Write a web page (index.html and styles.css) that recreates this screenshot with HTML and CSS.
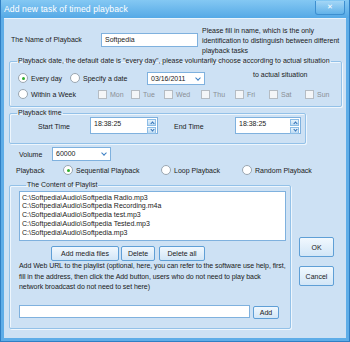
FILE: index.html
```html
<!DOCTYPE html>
<html lang="en">
<head>
<meta charset="UTF-8">
<title>Add new task of timed playback</title>
<link rel="stylesheet" href="styles.css">
</head>
<body>
<div class="window">
    <div class="titlebar">
        <span class="title">Add new task of timed playback</span>
        <span class="close">&#x2715;</span>
    </div>
    <div class="client">
        <div class="name-row">
            <label class="name-label">The Name of Playback</label>
            <div class="field name-field">Softpedia</div>
            <div class="hint">Please fill in name, which is the only identification to distinguish between different playback tasks</div>
        </div>

        <fieldset class="group date-group">
            <legend>Playback date, the default date is "every day", please voluntarily choose according to actual situation</legend>
            <div class="row date-row">
                <span class="opt opt-every"><i class="radio on"></i>Every day</span>
                <span class="opt opt-specify"><i class="radio"></i>Specify a date</span>
                <div class="field combo date-combo">03/16/2011<i class="chev"></i></div>
                <span class="extra">to actual situation</span>
            </div>
            <div class="row week-row">
                <span class="opt opt-week"><i class="radio"></i>Within a Week</span>
                <span class="day w33"><i class="check"></i>Mon</span>
                <span class="day w33"><i class="check"></i>Tue</span>
                <span class="day w37"><i class="check"></i>Wed</span>
                <span class="day w34"><i class="check"></i>Thu</span>
                <span class="day w34"><i class="check"></i>Fri</span>
                <span class="day w36"><i class="check"></i>Sat</span>
                <span class="day"><i class="check"></i>Sun</span>
            </div>
        </fieldset>

        <fieldset class="group time-group">
            <legend>Playback time</legend>
            <div class="row time-row">
                <span class="start-label">Start Time</span>
                <div class="field time start-time">18:38:25<span class="spin"><i class="up"></i><i class="down"></i></span></div>
                <span class="end-label">End Time</span>
                <div class="field time end-time">18:38:25<span class="spin"><i class="up"></i><i class="down"></i></span></div>
            </div>
        </fieldset>

        <div class="row volume-row">
            <span class="volume-label">Volume</span>
            <div class="field combo volume-combo">60000<i class="chev"></i></div>
        </div>

        <div class="row mode-row">
            <span class="mode-label">Playback</span>
            <span class="opt opt-seq"><i class="radio on"></i>Sequential Playback</span>
            <span class="opt opt-loop"><i class="radio"></i>Loop Playback</span>
            <span class="opt"><i class="radio"></i>Random Playback</span>
        </div>

        <div class="bottom">
            <fieldset class="group list-group">
                <legend>The Content of Playlist</legend>
                <div class="listbox">
                    <div>C:\Softpedia\Audio\Softpedia Radio.mp3</div>
                    <div>C:\Softpedia\Audio\Softpedia Recording.m4a</div>
                    <div>C:\Softpedia\Audio\Softpedia test.mp3</div>
                    <div>C:\Softpedia\Audio\Softpedia Tested.mp3</div>
                    <div>C:\Softpedia\Audio\Softpedia.mp3</div>
                </div>
                <div class="list-buttons">
                    <button class="btn add-media">Add media files</button>
                    <button class="btn delete">Delete</button>
                    <button class="btn delete-all">Delete all</button>
                </div>
                <p class="url-note">Add Web URL to the playlist (optional, here, you can refer to the software use help, first,<br>fill in the address, then click the Add button, users who do not need to play back<br>network broadcast do not need to set here)</p>
                <div class="url-row">
                    <div class="field url-field"></div>
                    <button class="btn add">Add</button>
                </div>
            </fieldset>
            <div class="side-buttons">
                <button class="btn ok">OK</button>
                <button class="btn cancel">Cancel</button>
            </div>
        </div>
    </div>
</div>
</body>
</html>
```

FILE: styles.css
```css
body {
    margin: 0;
    font-family: "Liberation Sans", Arial, sans-serif;
    font-size: 7px;
    color: #1a1a1a;
}
.window {
    width: 350px;
    height: 342px;
    box-sizing: border-box;
    padding: 0 3px 3px;
    background: #5eade8;
    border-left: 1px solid #2f7fc4;
    border-right: 1px solid #2f7fc4;
    border-bottom: 1px solid #2f7fc4;
}
.titlebar {
    height: 18px;
    display: flex;
    justify-content: space-between;
    align-items: flex-start;
    background: linear-gradient(#84c8f3, #55a9e6);
    margin: 0 -3px;
    padding: 0 4px 0 3px;
}
.title {
    color: #fff;
    font-size: 8.6px;
    line-height: 19px;
    letter-spacing: 0.1px;
}
.close {
    width: 28px;
    height: 13px;
    margin-top: 1px;
    background: linear-gradient(#a3d6f6, #62b2e9);
    border: 1px solid #3d8fd0;
    border-top: none;
    border-radius: 0 0 3px 3px;
    color: #fff;
    font-size: 7px;
    text-align: center;
    line-height: 12px;
}
.client {
    height: 320px;
    box-sizing: border-box;
    background: #cde1f4;
    border-top: 1px solid #eaf4fc;
    padding-left: 5px;
}
.row {
    display: flex;
    align-items: center;
}
.field {
    background: #fff;
    border: 1px solid #7fb1de;
    box-sizing: border-box;
    padding-left: 3px;
    position: relative;
}
.combo .chev {
    position: absolute;
    right: 4px;
    top: 3px;
    width: 3px;
    height: 3px;
    border-right: 1px solid #3b7fc4;
    border-bottom: 1px solid #3b7fc4;
    transform: rotate(45deg);
}
.radio {
    display: inline-block;
    width: 8px;
    height: 8px;
    border: 1px solid #9aa6b1;
    border-radius: 50%;
    background: #fff;
    margin-right: 3px;
    position: relative;
    flex-shrink: 0;
}
.radio.on::after {
    content: "";
    position: absolute;
    left: 2.5px;
    top: 2.5px;
    width: 3px;
    height: 3px;
    border-radius: 50%;
    background: #2fae2f;
}
.opt {
    display: flex;
    align-items: center;
}
.check {
    display: inline-block;
    width: 7px;
    height: 7px;
    border: 1px solid #b5bcc3;
    background: #f4f6f8;
    margin-right: 3px;
}
.day {
    display: flex;
    align-items: center;
    color: #8b8f94;
}
.w33 { width: 33px; }
.w34 { width: 34px; }
.w36 { width: 36px; }
.w37 { width: 37px; }

.name-row {
    display: flex;
    padding-top: 7px;
}
.name-label {
    width: 90px;
    margin-left: 2px;
    line-height: 14px;
    margin-top: 7px;
}
.name-field {
    width: 97px;
    height: 14px;
    margin-top: 7px;
    line-height: 12px;
}
.hint {
    width: 140px;
    margin-left: 4px;
    line-height: 10px;
}

.group {
    margin: 0;
    padding: 0;
    border: 1px solid #93c1e8;
    box-shadow: 1px 1px 0 #eef6fd, inset 1px 1px 0 #eef6fd;
    border-radius: 2px;
    box-sizing: border-box;
}
.group legend {
    padding: 0 1px;
    margin-left: 7px;
    line-height: 10px;
}
.date-group {
    width: 333px;
    padding-bottom: 6px;
}
.date-row {
    height: 14px;
    margin-top: 5px;
    margin-left: 8px;
}
.opt-every { width: 52px; }
.opt-specify { width: 77px; }
.date-combo {
    width: 58px;
    height: 13px;
    line-height: 11px;
}
.extra {
    align-self: flex-start;
    margin-top: 0;
    margin-left: 48px;
}
.week-row {
    height: 12px;
    margin-top: 3px;
    margin-left: 8px;
}
.opt-week { width: 80px; }

.time-group {
    width: 297px;
    margin-top: 1px;
    padding-bottom: 9px;
}
.time-row {
    height: 16px;
}
.start-label {
    width: 52px;
    margin-left: 28px;
}
.end-label {
    width: 61px;
    margin-left: 16px;
}
.time {
    height: 17px;
    margin-top: -1px;
    line-height: 12px;
}
.start-time { width: 68px; }
.end-time { width: 66px; }
.spin {
    position: absolute;
    right: 1px;
    top: 1px;
    width: 9px;
    display: flex;
    flex-direction: column;
    gap: 1px;
}
.spin i {
    background: linear-gradient(#e7f3fc, #bcdaf2);
    border: 1px solid #8dbde6;
    box-sizing: content-box;
    position: relative;
    height: 5px;
}
.spin i::after {
    content: "";
    position: absolute;
    left: 3px;
    width: 2px;
    height: 2px;
    border-left: 1px solid #2f6fb5;
    border-top: 1px solid #2f6fb5;
}
.spin .up::after {
    top: 2px;
    transform: rotate(45deg);
}
.spin .down::after {
    top: 0;
    transform: rotate(225deg);
}

.volume-row {
    height: 14px;
    margin-top: 3px;
}
.volume-label {
    width: 33px;
    margin-left: 10px;
}
.volume-combo {
    width: 59px;
    height: 14px;
    line-height: 12px;
}
.mode-row {
    height: 12px;
    margin-top: 3px;
}
.mode-label {
    width: 47px;
    margin-left: 7px;
}
.opt-seq { width: 98px; }
.opt-loop { width: 81px; }

.bottom {
    display: flex;
    margin-top: 4px;
}
.list-group {
    width: 282px;
    padding: 0 0 9px 9px;
}
.listbox {
    width: 267px;
    height: 50px;
    margin-top: 1px;
    background: #fff;
    border: 1px solid #7fb1de;
    box-sizing: border-box;
    padding: 1.5px 0 0 2px;
    line-height: 8.8px;
}
.list-buttons {
    display: flex;
    margin-top: 5px;
    margin-left: 32px;
}
.btn {
    font-family: inherit;
    font-size: 7px;
    color: #1a1a1a;
    padding: 0;
    background: linear-gradient(#f1f8fe, #d2e6f7);
    border: 1px solid #5f9fd6;
    border-radius: 2px;
    box-sizing: border-box;
}
.add-media { width: 68px; height: 15px; }
.delete { width: 34px; height: 15px; margin-left: 2px; }
.delete-all { width: 46px; height: 15px; margin-left: 4px; }
.url-note {
    margin: 0;
    line-height: 10.5px;
    white-space: nowrap;
    letter-spacing: -0.06px;
}
.url-row {
    display: flex;
    margin-top: 12.5px;
}
.url-field {
    width: 231px;
    height: 13px;
}
.add {
    width: 26px;
    height: 13px;
    margin-left: 3px;
    margin-top: 1px;
}
.side-buttons {
    display: flex;
    flex-direction: column;
    margin-left: 8px;
    padding-top: 57px;
    gap: 9px;
}
.ok, .cancel {
    width: 35px;
    height: 20px;
}
```
